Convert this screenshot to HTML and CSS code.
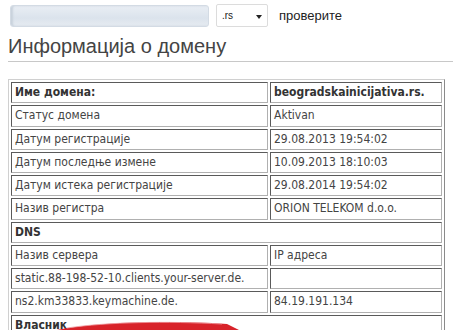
FILE: index.html
```html
<!DOCTYPE html>
<html lang="sr">
<head>
    <meta charset="UTF-8">
    <meta name="viewport" content="width=device-width, initial-scale=1.0">
    <title>Информација о домену</title>
    <link rel="stylesheet" href="styles.css">
</head>
<body>
    <div id="page">
        <form id="search">
            <input type="text" id="domain" value="">
            <div id="tld">
                <span>.rs</span>
                <span class="arrow"></span>
            </div>
            <a href="#" id="check">проверите</a>
        </form>

        <h2 id="title">Информација о домену</h2>

        <table id="info">
            <tr class="bold">
                <td class="label">Име домена:</td>
                <td>beogradskainicijativa.rs.</td>
            </tr>
            <tr>
                <td class="label">Статус домена</td>
                <td>Aktivan</td>
            </tr>
            <tr>
                <td class="label">Датум регистрације</td>
                <td>29.08.2013 19:54:02</td>
            </tr>
            <tr>
                <td class="label">Датум последње измене</td>
                <td>10.09.2013 18:10:03</td>
            </tr>
            <tr>
                <td class="label">Датум истека регистрације</td>
                <td>29.08.2014 19:54:02</td>
            </tr>
            <tr>
                <td class="label">Назив регистра</td>
                <td>ORION TELEKOM d.o.o.</td>
            </tr>
            <tr class="bold">
                <td colspan="2">DNS</td>
            </tr>
            <tr>
                <td class="label">Назив сервера</td>
                <td>IP адреса</td>
            </tr>
            <tr>
                <td class="label">static.88-198-52-10.clients.your-server.de.</td>
                <td></td>
            </tr>
            <tr>
                <td class="label">ns2.km33833.keymachine.de.</td>
                <td>84.19.191.134</td>
            </tr>
            <tr class="bold">
                <td colspan="2">Власник</td>
            </tr>
            <tr>
                <td class="label">&nbsp;</td>
                <td></td>
            </tr>
        </table>

        <svg id="swoosh" width="190" height="9" viewBox="0 0 190 9">
            <path d="M0 9 C40 1 110 -1 170 3 L182 9 Z" fill="#d8232a"/>
            <path d="M10 7 C50 1 110 0 165 3" fill="none" stroke="#f0a0a4" stroke-width="0.8"/>
        </svg>
    </div>
</body>
</html>
```

FILE: styles.css
```css
body {
    margin: 0;
    background-color: #ffffff;
    font-family: "DejaVu Sans Condensed", "DejaVu Sans", sans-serif;
    color: #333333;
    overflow: hidden;
}

#page {
    position: relative;
    height: 330px;
    overflow: hidden;
}

#search {
    display: flex;
    align-items: center;
    margin: 0;
    padding: 4px 0 0 10px;
    font-family: "Liberation Sans", Arial, sans-serif;
}

#domain {
    box-sizing: border-box;
    width: 199px;
    height: 22px;
    margin: 0;
    border: 1px solid #d3dbe4;
    border-radius: 3px;
    background: linear-gradient(to bottom, #e9eef4, #dbe3ec 60%, #e6ebf1);
    box-shadow: inset 2px 0 2px #c9d2dc;
}

#tld {
    box-sizing: border-box;
    display: flex;
    align-items: center;
    justify-content: space-between;
    width: 52px;
    height: 23px;
    margin-left: 7px;
    padding: 0 5px 0 5px;
    border: 1px solid #dcdcdc;
    border-radius: 2px;
    background-color: #ffffff;
    font-size: 10px;
    color: #222222;
}

#tld .arrow {
    width: 0;
    height: 0;
    border-left: 3px solid transparent;
    border-right: 3px solid transparent;
    border-top: 4px solid #222222;
    margin-top: 2px;
}

#check {
    margin-left: 11px;
    font-size: 13px;
    color: #222222;
    text-decoration: none;
}

#title {
    margin: 7px 2px 0 8px;
    padding-bottom: 3px;
    border-bottom: 1px solid #c8c8c8;
    font-family: "Liberation Sans", Arial, sans-serif;
    font-size: 20px;
    font-weight: normal;
    line-height: 24px;
    color: #444444;
}

#info {
    margin: 17px 0 0 8px;
    width: 437px;
    border: 1px solid;
    border-color: #d0d0d0 #8a8a8a #8a8a8a #d0d0d0;
    border-spacing: 2px;
    font-size: 12px;
    color: #444444;
}

#info td {
    height: 15.25px;
    padding: 2px 3px;
    line-height: 15.25px;
    border: 1px solid;
    border-color: #5a5a5a #b0b0b0 #b0b0b0 #5a5a5a;
    white-space: nowrap;
}

#info td.label {
    width: 249px;
}

#info tr.bold td {
    font-weight: bold;
    color: #333333;
}

#swoosh {
    position: absolute;
    left: 57px;
    top: 321px;
}
```
